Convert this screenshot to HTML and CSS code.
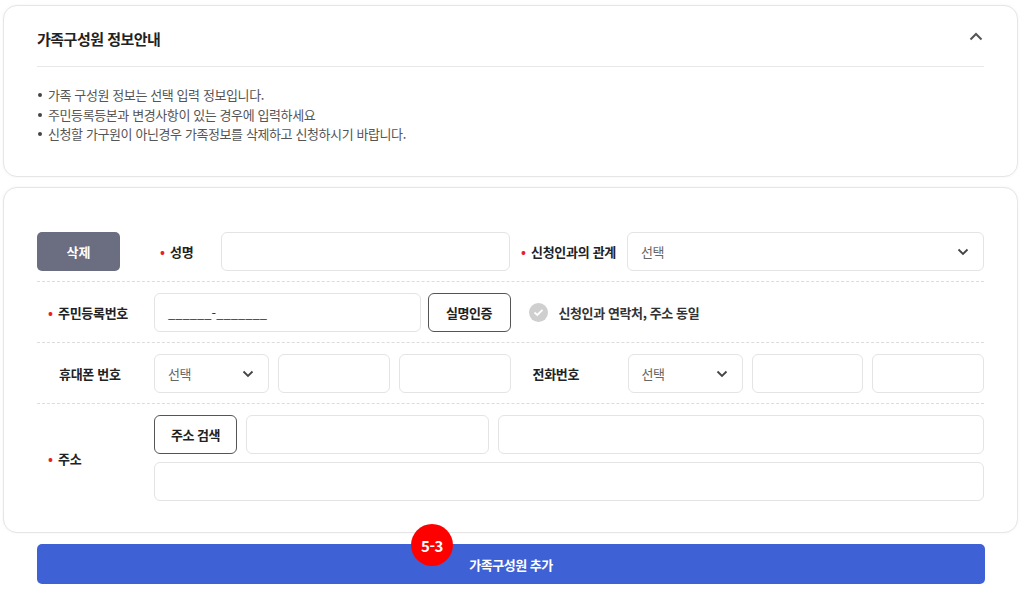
FILE: index.html
```html
<!DOCTYPE html>
<html lang="ko">
<head>
    <meta charset="UTF-8">
    <meta name="viewport" content="width=device-width, initial-scale=1.0">
    <title>가족구성원 정보</title>
    <link rel="stylesheet" href="styles.css">
</head>
<body>

<div class="page">
    <section class="card info">
        <div class="info-head">
            <h2>가족구성원 정보안내</h2>
            <svg class="chev-up" width="14" height="9" viewBox="0 0 14 9"><path d="M1.5 7.5 L7 2 L12.5 7.5" fill="none" stroke="#555" stroke-width="2"/></svg>
        </div>
        <ul class="info-list">
            <li>가족 구성원 정보는 선택 입력 정보입니다.</li>
            <li>주민등록등본과 변경사항이 있는 경우에 입력하세요</li>
            <li>신청할 가구원이 아닌경우 가족정보를 삭제하고 신청하시기 바랍니다.</li>
        </ul>
    </section>

    <section class="card form">
        <div class="row row-first">
            <button class="btn-del">삭제</button>
            <label class="lbl req lbl-name">성명</label>
            <input class="field" type="text">
            <label class="lbl req">신청인과의 관계</label>
            <div class="field select">
                <span>선택</span>
                <svg width="12" height="8" viewBox="0 0 12 8"><path d="M1.5 1.5 L6 6 L10.5 1.5" fill="none" stroke="#444" stroke-width="1.8"/></svg>
            </div>
        </div>

        <div class="row">
            <label class="lbl req">주민등록번호</label>
            <div class="ctrl ctrl-rrn">
                <div class="field rrn">______-_______</div>
                <button class="btn-line">실명인증</button>
            </div>
            <div class="same">
                <span class="check">
                    <svg width="11" height="9" viewBox="0 0 11 9"><path d="M1.5 4.5 L4.3 7 L9.5 1.8" fill="none" stroke="#fff" stroke-width="1.8"/></svg>
                </span>
                신청인과 연락처, 주소 동일
            </div>
        </div>

        <div class="row">
            <label class="lbl">휴대폰 번호</label>
            <div class="ctrl ctrl-phone">
                <div class="field select">
                    <span>선택</span>
                    <svg width="12" height="8" viewBox="0 0 12 8"><path d="M1.5 1.5 L6 6 L10.5 1.5" fill="none" stroke="#444" stroke-width="1.8"/></svg>
                </div>
                <input class="field" type="text">
                <input class="field" type="text">
            </div>
            <label class="lbl">전화번호</label>
            <div class="ctrl ctrl-phone">
                <div class="field select">
                    <span>선택</span>
                    <svg width="12" height="8" viewBox="0 0 12 8"><path d="M1.5 1.5 L6 6 L10.5 1.5" fill="none" stroke="#444" stroke-width="1.8"/></svg>
                </div>
                <input class="field" type="text">
                <input class="field" type="text">
            </div>
        </div>

        <div class="row row-addr">
            <label class="lbl req">주소</label>
            <div class="ctrl ctrl-addr">
                <button class="btn-line">주소 검색</button>
                <input class="field" type="text">
                <input class="field" type="text">
                <input class="field full" type="text">
            </div>
        </div>
    </section>

    <div class="submit-wrap">
        <button class="btn-submit">가족구성원 추가</button>
        <span class="badge">5-3</span>
    </div>
</div>

</body>
</html>
```

FILE: styles.css
```css
body {
    margin: 0;
    padding: 0;
    background: #fff;
    font-family: "Noto Sans CJK KR", "Noto Sans", sans-serif;
    color: #222;
}
.page {
    padding: 5px 6px 0 3px;
}
.card {
    background: #fff;
    border: 1px solid #e6e6e6;
    border-radius: 14px;
    box-shadow: 0 0 3px rgba(0, 0, 0, 0.05);
}

/* info card */
.info {
    height: 170px;
    padding: 0 33px;
}
.info-head {
    display: flex;
    align-items: center;
    justify-content: space-between;
    height: 55px;
    padding-top: 5px;
    border-bottom: 1px solid #e8e8e8;
}
.info-head h2 {
    margin: 0;
    font-size: 15px;
    font-weight: 700;
    letter-spacing: -0.5px;
    color: #222;
}
.chev-up {
    margin-right: 1px;
    margin-top: -4px;
}
.info-list {
    list-style: none;
    margin: 0;
    padding: 18px 0 0;
}
.info-list li {
    position: relative;
    padding-left: 11px;
    font-size: 13px;
    line-height: 19.5px;
    letter-spacing: -0.4px;
    color: #555;
}
.info-list li::before {
    content: "";
    position: absolute;
    left: 1px;
    top: 8px;
    width: 4px;
    height: 4px;
    border-radius: 50%;
    background: #444;
}

/* form card */
.form {
    margin-top: 10px;
    padding: 33px 33px 21px;
}
.row {
    display: grid;
    grid-template-columns: 117px 1fr 117px 1fr;
    align-items: center;
    padding: 11px 0 10px;
    border-bottom: 1px dashed #dcdcdc;
}
.row-first {
    grid-template-columns: 83px 101px 1fr 117px 357px;
}
.row-addr {
    grid-template-columns: 117px 1fr;
    border-bottom: none;
}
.lbl {
    padding-left: 22px;
    font-size: 13px;
    font-weight: 700;
    letter-spacing: -0.3px;
    color: #222;
}
.req::before {
    content: "•";
    display: inline-block;
    width: 10px;
    margin-left: -11px;
    color: #e5202a;
    font-weight: 700;
}
.lbl-name {
    padding-left: 51px;
}
.field {
    box-sizing: border-box;
    height: 39px;
    border: 1px solid #e4e4e4;
    border-radius: 6px;
    background: #fff;
    font-family: inherit;
    font-size: 13px;
    padding: 0 13px;
    min-width: 0;
}
.select {
    display: flex;
    align-items: center;
    justify-content: space-between;
    color: #666;
    letter-spacing: -0.4px;
    padding-right: 14px;
}
.ctrl {
    display: grid;
    gap: 9px;
}
.ctrl-rrn {
    grid-template-columns: 1fr 83px;
    gap: 7px;
}
.rrn {
    display: flex;
    align-items: center;
    color: #333;
    letter-spacing: 0;
}
.ctrl-phone {
    grid-template-columns: 115px 1fr 1fr;
}
.ctrl-addr {
    grid-template-columns: 83px 243px 1fr;
    row-gap: 8px;
}
.ctrl-addr .full {
    grid-column: 1 / -1;
}
.btn-line {
    height: 39px;
    border: 1px solid #555;
    border-radius: 6px;
    background: #fff;
    font-family: inherit;
    font-size: 13px;
    font-weight: 700;
    letter-spacing: -0.5px;
    color: #222;
    cursor: pointer;
}
.btn-del {
    height: 39px;
    border: none;
    border-radius: 5px;
    background: #6b6d80;
    color: #fff;
    font-family: inherit;
    font-size: 13px;
    font-weight: 700;
    cursor: pointer;
}
.same {
    grid-column: 3 / 5;
    display: flex;
    align-items: center;
    gap: 11px;
    padding-left: 18px;
    font-size: 13px;
    font-weight: 700;
    letter-spacing: -0.4px;
    color: #333;
}
.check {
    display: flex;
    align-items: center;
    justify-content: center;
    width: 19px;
    height: 19px;
    border-radius: 50%;
    background: #cfcfcf;
}

/* submit */
.submit-wrap {
    position: relative;
    margin: 11px 33px 0 34px;
}
.btn-submit {
    display: block;
    width: 100%;
    height: 40px;
    border: none;
    border-radius: 5px;
    background: #3e61d6;
    color: #fff;
    font-family: inherit;
    font-size: 13px;
    font-weight: 700;
    letter-spacing: -0.5px;
    cursor: pointer;
}
.badge {
    position: absolute;
    left: 374px;
    top: -20px;
    width: 42px;
    height: 42px;
    border-radius: 50%;
    background: #ff0000;
    color: #fff;
    font-size: 15px;
    font-weight: 700;
    display: flex;
    align-items: center;
    justify-content: center;
    letter-spacing: -0.5px;
}
```
